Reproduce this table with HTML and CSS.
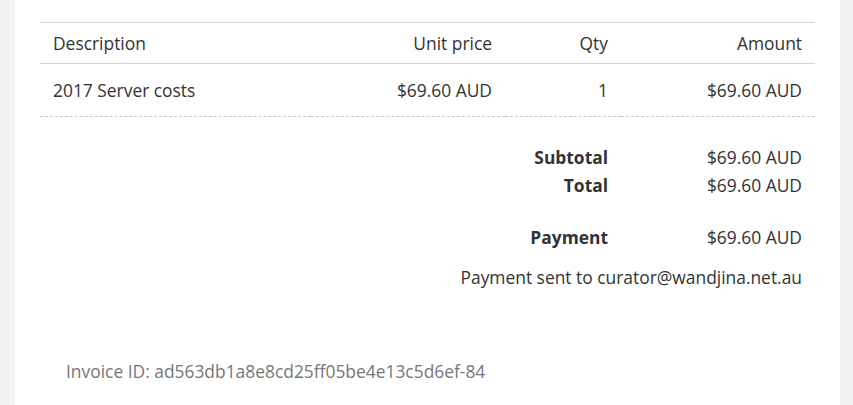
FILE: index.html
```html
<!DOCTYPE html>
<html>
<head>
<meta charset="utf-8">
<link rel="stylesheet" href="styles.css">
</head>
<body>
<div class="page">
  <table class="items">
    <colgroup>
      <col class="c-desc"><col class="c-unit"><col class="c-qty"><col class="c-amt">
    </colgroup>
    <thead>
      <tr><th class="left">Description</th><th>Unit price</th><th>Qty</th><th>Amount</th></tr>
    </thead>
    <tbody>
      <tr class="item"><td class="left">2017 Server costs</td><td>$69.60 AUD</td><td>1</td><td>$69.60 AUD</td></tr>
    </tbody>
    <tbody class="totals">
      <tr class="sub"><td colspan="3" class="label">Subtotal</td><td>$69.60 AUD</td></tr>
      <tr class="tot"><td colspan="3" class="label">Total</td><td>$69.60 AUD</td></tr>
      <tr class="pay"><td colspan="3" class="label">Payment</td><td>$69.60 AUD</td></tr>
      <tr class="sent"><td colspan="4">Payment sent to curator@wandjina.net.au</td></tr>
    </tbody>
  </table>
  <p class="invoice-id">Invoice ID: ad563db1a8e8cd25ff05be4e13c5d6ef-84</p>
</div>
</body>
</html>
```
FILE: styles.css
```css
html, body {
  margin: 0;
  padding: 0;
}
body {
  background: #f2f2f2;
  font-family: "Open Sans", "Noto Sans", sans-serif;
  color: #333;
  font-size: 17.4px;
}
.page {
  background: #fff;
  margin: 0 13px 0 15px;
  padding: 22px 25px 1px 25px;
  min-height: 405px;
  box-sizing: border-box;
}
.items {
  width: 100%;
  border-collapse: collapse;
  table-layout: fixed;
}
.c-desc { width: 271px; }
.c-unit { width: 194px; }
.c-qty { width: 116px; }
.c-amt { width: 194px; }
th, td {
  text-align: right;
  padding: 0 13px;
  font-weight: normal;
  white-space: nowrap;
  line-height: 24px;
}
.left { text-align: left; }
thead th {
  height: 40px;
  border-top: 1px solid #d3d3d3;
  border-bottom: 1px solid #d3d3d3;
}
.item td {
  height: 52px;
  border-bottom: 1px dashed #c8c8c8;
}
.totals td { height: 28px; }
.totals .sub td { padding-top: 26px; }
.totals .label { font-weight: bold; }
.totals .pay td { padding-top: 24px; }
.totals .sent td { padding-top: 12px; }
.invoice-id {
  margin: 68px 0 0 26px;
  color: #777;
  line-height: 24px;
}
```
